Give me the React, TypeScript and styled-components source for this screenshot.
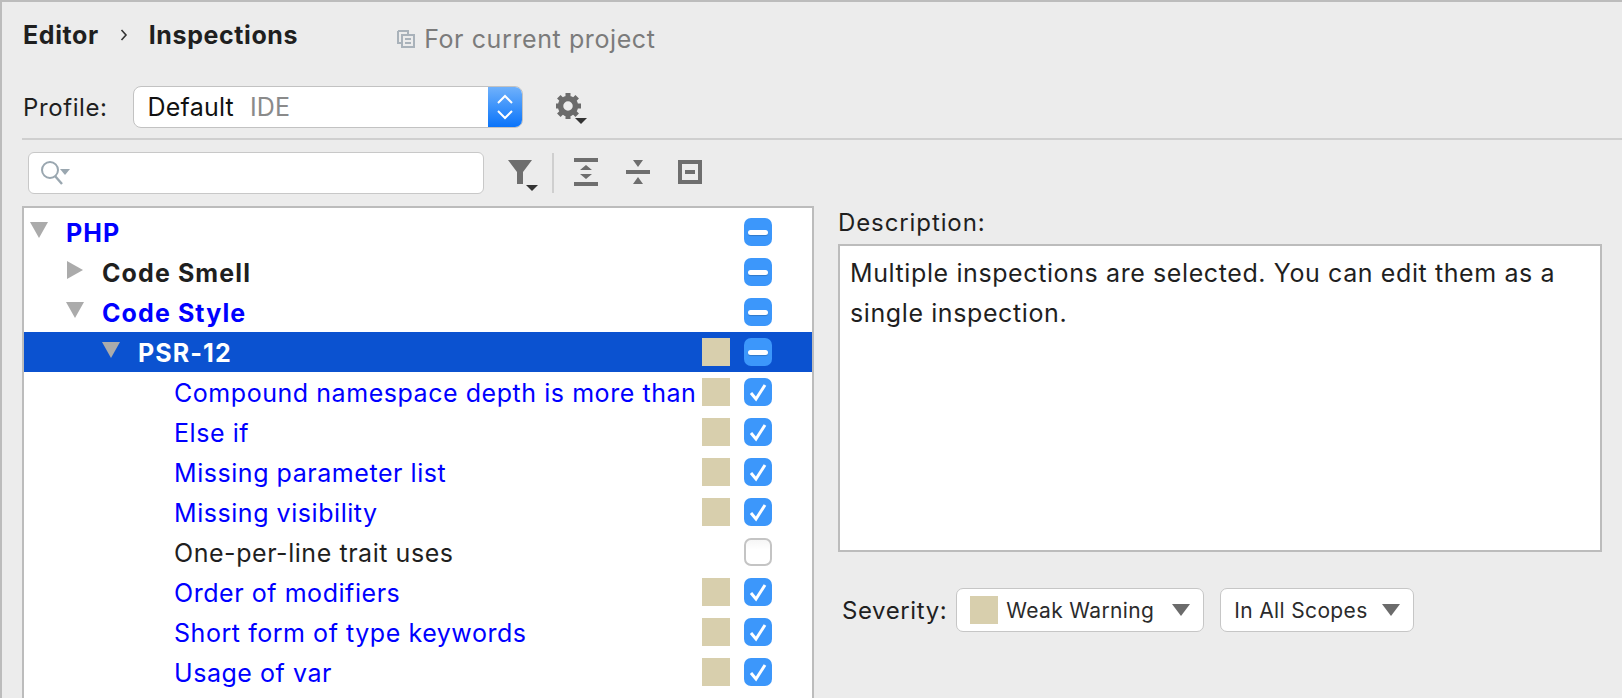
import React from 'react';
import styled, { createGlobalStyle } from 'styled-components';

const GlobalStyle = createGlobalStyle`
    html, body {
        margin: 0;
        padding: 0;
        background-color: #ececec;
    }
    * {
        box-sizing: border-box;
    }
`;

const Page = styled.div`
    display: flex;
    flex-flow: column;
    width: 1622px;
    height: 698px;
    overflow: hidden;
    padding-left: 20px;
    color: #1f1f1f;
    font-family: Inter, 'Liberation Sans', sans-serif;
    font-size: 24px;
    background-color: #ececec;
    border-top: 2px solid #bcbcbc;
    border-left: 2px solid #bcbcbc;
`;
const Header = styled.div`
    display: flex;
    align-items: center;
    height: 66px;
    padding: 0 0 0 1px;
`;
const Crumb = styled.span`
    font-size: 25px;
    font-weight: 700;
    letter-spacing: 0.6px;
`;
const CrumbSep = styled.svg`
    width: 8px;
    height: 14px;
    margin: 0 21px 0 21px;
`;
const Scope = styled.div`
    display: flex;
    align-items: center;
    gap: 9px;
    margin: 8px 0 0 99px;
    color: #7b7b7b;
    font-size: 25px;
    letter-spacing: 0.6px;
`;
const ProfileRow = styled.div`
    display: flex;
    align-items: center;
    height: 42px;
    margin-top: 18px;
    padding-left: 1px;
`;
const Label = styled.span`
    font-size: 24px;
    letter-spacing: 0.6px;
`;
const ProfileSelect = styled.div`
    display: flex;
    align-items: stretch;
    width: 390px;
    height: 42px;
    margin-left: 25px;
    overflow: hidden;
    background-color: #fff;
    border: 1px solid #c2c2c2;
    border-radius: 8px;
`;
const ProfileValue = styled.div`
    flex: 1;
    display: flex;
    align-items: center;
    gap: 16px;
    padding-left: 14px;
    font-size: 25px;
    letter-spacing: 0.2px;
    color: #111;
`;
const Muted = styled.span`
    color: #8a8a8a;
`;
const Stepper = styled.div`
    display: flex;
    align-items: center;
    justify-content: center;
    width: 34px;
    background: linear-gradient(#6fb1fb, #0a74fa);
`;
const GearButton = styled.svg`
    width: 32px;
    height: 34px;
    margin: 6px 0 0 33px;
`;
const Divider = styled.div`
    height: 2px;
    margin-top: 10px;
    background-color: #cfcfcf;
`;
const Toolbar = styled.div`
    display: flex;
    align-items: center;
    height: 42px;
    margin-top: 12px;
    padding-left: 6px;
`;
const SearchBox = styled.div`
    display: flex;
    align-items: center;
    width: 456px;
    height: 42px;
    padding-left: 11px;
    background-color: #fff;
    border: 1px solid #c8c8c8;
    border-radius: 6px;
`;
const ToolIcon = styled.svg<{ $left: number }>`
    flex: none;
    width: 32px;
    height: 36px;
    margin: 4px 0 0 ${props => props.$left}px;
`;
const ToolSep = styled.div`
    width: 2px;
    height: 40px;
    margin-left: 13px;
    background-color: #cfcfcf;
`;
const Main = styled.div`
    flex: 1;
    display: flex;
    gap: 24px;
    min-height: 0;
    margin-top: 12px;
    padding-right: 20px;
`;
const Tree = styled.div`
    flex: none;
    width: 792px;
    height: 560px;
    padding-top: 4px;
    background-color: #fff;
    border: 2px solid #bcbcbc;
`;
const Row = styled.div<{ $level: number; $selected?: boolean }>`
    display: flex;
    align-items: center;
    height: 40px;
    padding-left: ${props => 6 + props.$level * 36}px;
    padding-right: 40px;
    background-color: ${props => (props.$selected ? '#0b52d0' : 'transparent')};
`;
const Arrow = styled.svg`
    flex: none;
    width: 18px;
    height: 18px;
    margin: -4px 18px 0 0;
`;
const ArrowSpace = styled.div`
    flex: none;
    width: 36px;
`;
const RowText = styled.span<{ $tone: string; $bold?: boolean }>`
    flex: 1;
    white-space: nowrap;
    margin-top: 1px;
    color: ${props => props.$tone};
    font-size: 25px;
    font-weight: ${props => (props.$bold ? 700 : 400)};
    letter-spacing: ${props => (props.$bold ? 1.1 : 0.55)}px;
`;
const Swatch = styled.div`
    flex: none;
    width: 28px;
    height: 28px;
    background-color: #d8cfad;
`;
const SwatchSlot = styled.div`
    flex: none;
    width: 28px;
    height: 28px;
    margin: 0 14px 0 4px;
`;
const CheckBox = styled.div<{ $on: boolean }>`
    flex: none;
    display: flex;
    align-items: center;
    justify-content: center;
    width: 28px;
    height: 28px;
    background: ${props => (props.$on ? '#3c97fb' : 'linear-gradient(#f6f6f6, #fff 40%)')};
    border: ${props => (props.$on ? 'none' : '2px solid #c4c4c4')};
    border-radius: 7px;
`;
const Dash = styled.div`
    width: 20px;
    height: 5px;
    background-color: #fff;
    border-radius: 3px;
    box-shadow: 0 1px 1px rgba(0, 0, 0, 0.2);
`;
const Side = styled.div`
    flex: 1;
    display: flex;
    flex-flow: column;
`;
const DescLabel = styled.div`
    height: 38px;
    line-height: 34px;
    font-size: 24px;
    letter-spacing: 0.9px;
`;
const DescBox = styled.div`
    height: 308px;
    padding: 7px 10px;
    line-height: 40px;
    font-size: 25px;
    letter-spacing: 0.6px;
    background-color: #fff;
    border: 2px solid #bcbcbc;
`;
const SeverityRow = styled.div`
    display: flex;
    align-items: center;
    height: 44px;
    margin-top: 36px;
    padding-left: 4px;
`;
const SevLabel = styled(Label)`
    margin-right: 9px;
`;
const Combo = styled.div<{ $width: number; $left?: number }>`
    display: flex;
    align-items: center;
    width: ${props => props.$width}px;
    height: 44px;
    margin-left: ${props => props.$left || 0}px;
    padding: 0 13px;
    gap: 8px;
    background-color: #fff;
    border: 1px solid #c6c6c6;
    border-radius: 7px;
`;
const ComboText = styled.span`
    flex: 1;
    color: #2b2b2b;
    font-size: 21px;
    letter-spacing: 0.35px;
    white-space: nowrap;
`;
const ComboCaret = styled.svg`
    flex: none;
    width: 18px;
    height: 12px;
`;

const BLUE = '#0000ff';
const DARK = '#1f1f1f';

type Item = {
    text: string;
    level: number;
    open?: boolean;
    leaf?: boolean;
    tone: string;
    state: 'mixed' | 'on' | 'off';
    swatch?: boolean;
    selected?: boolean;
};

const items: Item[] = [
    { text: 'PHP', level: 0, open: true, tone: BLUE, state: 'mixed' },
    { text: 'Code Smell', level: 1, tone: DARK, state: 'mixed' },
    { text: 'Code Style', level: 1, open: true, tone: BLUE, state: 'mixed' },
    { text: 'PSR-12', level: 2, open: true, tone: '#fff', state: 'mixed', swatch: true, selected: true },
    { text: 'Compound namespace depth is more than', level: 3, leaf: true, tone: BLUE, state: 'on', swatch: true },
    { text: 'Else if', level: 3, leaf: true, tone: BLUE, state: 'on', swatch: true },
    { text: 'Missing parameter list', level: 3, leaf: true, tone: BLUE, state: 'on', swatch: true },
    { text: 'Missing visibility', level: 3, leaf: true, tone: BLUE, state: 'on', swatch: true },
    { text: 'One-per-line trait uses', level: 3, leaf: true, tone: DARK, state: 'off' },
    { text: 'Order of modifiers', level: 3, leaf: true, tone: BLUE, state: 'on', swatch: true },
    { text: 'Short form of type keywords', level: 3, leaf: true, tone: BLUE, state: 'on', swatch: true },
    { text: 'Usage of var', level: 3, leaf: true, tone: BLUE, state: 'on', swatch: true },
];

const gearTeeth = [0, 45, 90, 135, 180, 225, 270, 315];

const App: React.FC = () => {
    return (
        <Page>
            <GlobalStyle />
            <Header>
                <Crumb>Editor</Crumb>
                <CrumbSep viewBox="0 0 8 14">
                    <path d="M1.5 2l4.5 5-4.5 5" fill="none" stroke="#333" strokeWidth="1.6" />
                </CrumbSep>
                <Crumb>Inspections</Crumb>
                <Scope>
                    <svg width="18" height="18" viewBox="0 0 18 18">
                        <path d="M1 1h10v3M1 1v12h4" fill="none" stroke="#a9b2ba" strokeWidth="2" />
                        <rect x="5" y="5" width="12" height="12" fill="none" stroke="#a9b2ba" strokeWidth="2" />
                        <path d="M8 9h6M8 13h6" stroke="#a9b2ba" strokeWidth="2" />
                    </svg>
                    For current project
                </Scope>
            </Header>
            <ProfileRow>
                <Label>Profile:</Label>
                <ProfileSelect>
                    <ProfileValue>
                        Default <Muted>IDE</Muted>
                    </ProfileValue>
                    <Stepper>
                        <svg width="18" height="30" viewBox="0 0 18 30">
                            <path d="M2 11l7-7 7 7M2 19l7 7 7-7" fill="none" stroke="#fff" strokeWidth="2" />
                        </svg>
                    </Stepper>
                </ProfileSelect>
                <GearButton viewBox="0 0 32 34">
                    <g fill="#6b6b6b">
                        {gearTeeth.map(deg => (
                            <rect key={deg} x="9.5" y="0" width="5" height="6" transform={`rotate(${deg} 12 13)`} />
                        ))}
                    </g>
                    <circle cx="12" cy="13" r="7.5" fill="none" stroke="#6b6b6b" strokeWidth="5.5" />
                    <path d="M19 25h12l-6 6z" fill="#333" />
                </GearButton>
            </ProfileRow>
            <Divider />
            <Toolbar>
                <SearchBox>
                    <svg width="30" height="26" viewBox="0 0 30 26">
                        <circle cx="10" cy="10" r="8" fill="none" stroke="#9aa7b0" strokeWidth="2" />
                        <path d="M15 16l7 8" stroke="#9aa7b0" strokeWidth="2.4" />
                        <path d="M20 9h10l-5 6z" fill="#9aa7b0" />
                    </svg>
                </SearchBox>
                <ToolIcon $left={23} viewBox="0 0 32 36">
                    <path d="M1 3h24l-9 12v12h-6V15z" fill="#6e6e6e" />
                    <path d="M19 28h12l-6 6z" fill="#333" />
                </ToolIcon>
                <ToolSep />
                <ToolIcon $left={20} viewBox="0 0 32 36">
                    <path d="M0 1h24v4H0zM0 25h24v4H0zM12 8l6 5H6zM12 22l6-5H6z" fill="#6e6e6e" />
                </ToolIcon>
                <ToolIcon $left={20} viewBox="0 0 32 36">
                    <path d="M0 13h24v4H0zM7 3h10l-5 7zM7 27h10l-5-7z" fill="#6e6e6e" />
                </ToolIcon>
                <ToolIcon $left={20} viewBox="0 0 32 36">
                    <path d="M0 3h24v24H0zM4 7v16h16V7zM7 13h10v4H7z" fill="#6e6e6e" fillRule="evenodd" />
                </ToolIcon>
            </Toolbar>
            <Main>
                <Tree>
                    {items.map(item => (
                        <Row key={item.text} $level={item.level} $selected={item.selected}>
                            {item.leaf ? (
                                <ArrowSpace />
                            ) : (
                                <Arrow viewBox="0 0 18 18">
                                    <path d={item.open ? 'M0 1h18l-9 16z' : 'M1 0l16 9-16 9z'} fill="#ababab" />
                                </Arrow>
                            )}
                            <RowText $tone={item.tone} $bold={!item.leaf}>
                                {item.text}
                            </RowText>
                            <SwatchSlot>{item.swatch ? <Swatch /> : null}</SwatchSlot>
                            <CheckBox $on={item.state !== 'off'}>
                                {item.state === 'mixed' ? <Dash /> : null}
                                {item.state === 'on' ? (
                                    <svg width="20" height="20" viewBox="0 0 20 20">
                                        <path d="M3 11l5 6L17 3" fill="none" stroke="#fff" strokeWidth="3" />
                                    </svg>
                                ) : null}
                            </CheckBox>
                        </Row>
                    ))}
                </Tree>
                <Side>
                    <DescLabel>Description:</DescLabel>
                    <DescBox>
                        Multiple inspections are selected. You can edit them as a single inspection.
                    </DescBox>
                    <SeverityRow>
                        <SevLabel>Severity:</SevLabel>
                        <Combo $width={248}>
                            <Swatch />
                            <ComboText>Weak Warning</ComboText>
                            <ComboCaret viewBox="0 0 18 12">
                                <path d="M0 0h18l-9 12z" fill="#6b6b6b" />
                            </ComboCaret>
                        </Combo>
                        <Combo $width={194} $left={16}>
                            <ComboText>In All Scopes</ComboText>
                            <ComboCaret viewBox="0 0 18 12">
                                <path d="M0 0h18l-9 12z" fill="#6b6b6b" />
                            </ComboCaret>
                        </Combo>
                    </SeverityRow>
                </Side>
            </Main>
        </Page>
    );
};

export default App;
